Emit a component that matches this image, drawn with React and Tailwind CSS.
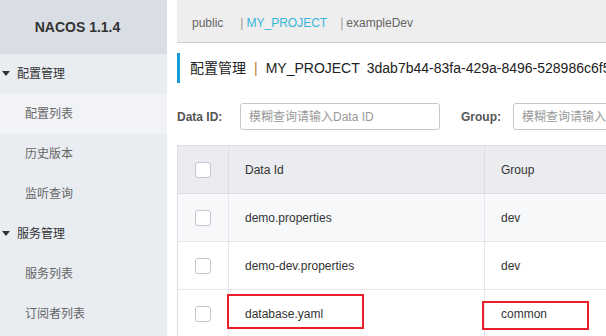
const font = "font-['Liberation_Sans','Noto_Sans_CJK_SC',sans-serif]";

const menu = [
  { label: "配置管理", group: true },
  { label: "配置列表", active: true },
  { label: "历史版本" },
  { label: "监听查询" },
  { label: "服务管理", group: true },
  { label: "服务列表" },
  { label: "订阅者列表" },
];

const rows = [
  { id: "demo.properties", group: "dev", shade: true },
  { id: "demo-dev.properties", group: "dev" },
  { id: "database.yaml", group: "common" },
];

function Checkbox() {
  return <div className="w-4 h-4 rounded-[3px] border border-[#c4c6cf] bg-white" />;
}

export default function App() {
  return (
    <div className={`relative w-[606px] h-[336px] overflow-hidden flex bg-white ${font}`}>
      <aside className="w-[167px] shrink-0 bg-[#e9ecf1]">
        <div className="h-[54px] bg-[#d9dde4] flex items-center justify-center pr-[12px]">
          <span className="text-[14px] font-bold text-[#333]">NACOS 1.1.4</span>
        </div>
        {menu.map((m) => (
          <div
            key={m.label}
            className={`h-10 flex items-center text-[12px] ${m.active ? "bg-[#f2f3f7]" : ""} ${m.group ? "text-[#333] pl-[2px]" : "text-[#666] pl-[25px]"}`}
          >
            {m.group && (
              <svg width="8" height="6" viewBox="0 0 8 6" className="mr-[7px]">
                <path d="M0 0 H8 L4 5 Z" fill="#333" />
              </svg>
            )}
            {m.label}
          </div>
        ))}
      </aside>

      <main className="flex-1 min-w-0 pl-[10px] overflow-hidden">
        <div className="h-[43px] bg-[#eeeeee] border-b border-[#cccccc] flex items-center pt-[4px] pl-[15px] text-[12px] text-[#666] whitespace-nowrap">
          <span>public</span>
          <span className="ml-[17px] mr-[3px] text-[#999]">|</span>
          <span className="text-[#36b5dc]">MY_PROJECT</span>
          <span className="ml-[13px] mr-[3px] text-[#999]">|</span>
          <span>exampleDev</span>
        </div>

        <div className="mt-[10px] h-[30px] flex items-center border-l-[3px] border-[#1a9ad6] pl-[10px] text-[14px] text-[#222] whitespace-nowrap">
          <span>配置管理</span>
          <span className="mx-[8px] text-[#c07a3a]">|</span>
          <span>MY_PROJECT</span>
          <span className="ml-[7px]">3dab7b44-83fa-429a-8496-528986c6f54a</span>
        </div>

        <div className="mt-[20px] h-[27px] flex items-center text-[12px] whitespace-nowrap">
          <span className="shrink-0 font-bold text-[#555] w-[63px]">Data ID:</span>
          <div className="shrink-0 w-[200px] h-[27px] rounded-[3px] border border-[#c4c6cf] flex items-center pl-[8px] text-[#999]">
            模糊查询请输入Data ID
          </div>
          <span className="shrink-0 font-bold text-[#555] ml-[21px] w-[52px]">Group:</span>
          <div className="shrink-0 w-[200px] h-[27px] rounded-[3px] border border-[#c4c6cf] flex items-center pl-[8px] text-[#999]">
            模糊查询请输入Group
          </div>
        </div>

        <div className="mt-[15px] w-[600px] border-l border-t border-[#dcdee3] text-[12px] text-[#333] whitespace-nowrap">
          <div className="h-[48px] flex bg-[#ebecf0] border-b border-[#dcdee3]">
            <div className="w-[51px] flex items-center justify-center border-r border-[#dcdee3]">
              <Checkbox />
            </div>
            <div className="w-[256px] flex items-center pl-[16px] border-r border-[#dcdee3]">Data Id</div>
            <div className="flex-1 flex items-center pl-[16px]">Group</div>
          </div>
          {rows.map((r) => (
            <div key={r.id} className={`h-[48px] flex border-b border-[#e6e7eb] ${r.shade ? "bg-[#f7f8fa]" : "bg-white"}`}>
              <div className="w-[51px] flex items-center justify-center border-r border-[#e6e7eb]">
                <Checkbox />
              </div>
              <div className="w-[256px] flex items-center pl-[16px] border-r border-[#e6e7eb]">{r.id}</div>
              <div className="flex-1 flex items-center pl-[16px]">{r.group}</div>
            </div>
          ))}
        </div>
      </main>

      {/* red annotation boxes */}
      <div className="absolute left-[227px] top-[294px] w-[137px] h-[35px] border-2 border-[#e8202a]" />
      <div className="absolute left-[482px] top-[301px] w-[107px] h-[29px] border-2 border-[#e8202a]" />
    </div>
  );
}
